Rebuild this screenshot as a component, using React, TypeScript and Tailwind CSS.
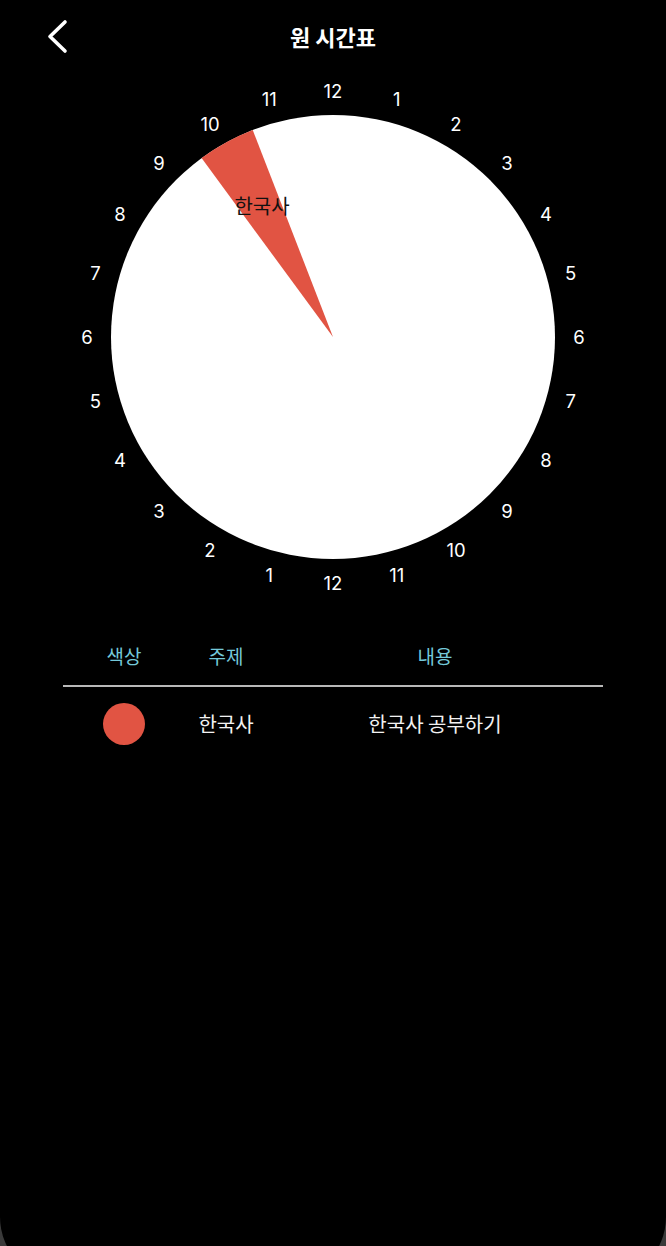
import React from "react";

const CX = 333;
const CY = 265;
const R = 222;
const LR = 246;

function pt(angleDeg: number, r: number) {
  const a = (angleDeg * Math.PI) / 180;
  return { x: CX + r * Math.sin(a), y: CY - r * Math.cos(a) };
}

function Clock() {
  const a1 = -36.3;
  const a2 = -21.2;
  const p1 = pt(a1, R);
  const p2 = pt(a2, R);
  const wedge = `M ${CX} ${CY} L ${p1.x} ${p1.y} A ${R} ${R} 0 0 1 ${p2.x} ${p2.y} Z`;
  const labels = Array.from({ length: 24 }, (_, i) => {
    const label = i === 0 ? 12 : i <= 12 ? i : i - 12;
    const p = pt(i * 15, LR);
    return { label, ...p };
  });
  return (
    <svg width={666} height={540} viewBox="0 0 666 540" className="block">
      <circle cx={CX} cy={CY} r={R} fill="#ffffff" />
      <path d={wedge} fill="#e15443" />
      {labels.map((l, i) => (
        <text
          key={i}
          x={l.x}
          y={l.y}
          textAnchor="middle"
          dominantBaseline="central"
          fill="#ffffff"
          fontSize={18.5}
          fontFamily="Inter, 'Noto Sans', sans-serif"
        >
          {l.label}
        </text>
      ))}
      <text
        x={262}
        y={133}
        textAnchor="middle"
        dominantBaseline="central"
        fill="#111111"
        fontSize={20}
        fontFamily="'Noto Sans CJK KR', sans-serif"
      >
        한국사
      </text>
    </svg>
  );
}

export default function App() {
  return (
    <div className="w-[666px] h-[1246px] overflow-hidden bg-[#3a3a3a]">
      <div
        className="w-[666px] h-[1281px] bg-black rounded-b-[64px] text-white"
        style={{ fontFamily: "Inter, 'Noto Sans CJK KR', sans-serif" }}
      >
        <div className="grid grid-cols-[1fr_auto_1fr] items-center h-[72px]">
          <div className="pl-[46px] flex items-center">
            <svg width="24" height="36" viewBox="0 0 24 36">
              <polyline
                points="19,4 4,18.5 19,33"
                fill="none"
                stroke="#ffffff"
                strokeWidth="3.6"
                strokeLinecap="round"
                strokeLinejoin="round"
              />
            </svg>
          </div>
          <div className="text-[22px] font-bold font-['Noto_Sans_CJK_KR'] leading-none">원 시간표</div>
          <div />
        </div>
        <Clock />
        <div className="mx-[63px] mt-[28px] font-['Noto_Sans_CJK_KR']">
          <div className="grid grid-cols-[122px_82px_1fr] h-8 items-center text-[19px] text-[#74c9da]">
            <div className="text-center">색상</div>
            <div className="text-center">주제</div>
            <div className="text-center">내용</div>
          </div>
          <div className="mt-[13px] h-[2px] bg-[#b8b8b8]" />
          <div className="grid grid-cols-[122px_82px_1fr] pt-[16px] items-center text-[20px] text-[#f2f2f2]">
            <div className="flex justify-center">
              <div className="w-[42px] h-[42px] rounded-full bg-[#e15443]" />
            </div>
            <div className="text-center">한국사</div>
            <div className="text-center">한국사 공부하기</div>
          </div>
        </div>
      </div>
    </div>
  );
}
